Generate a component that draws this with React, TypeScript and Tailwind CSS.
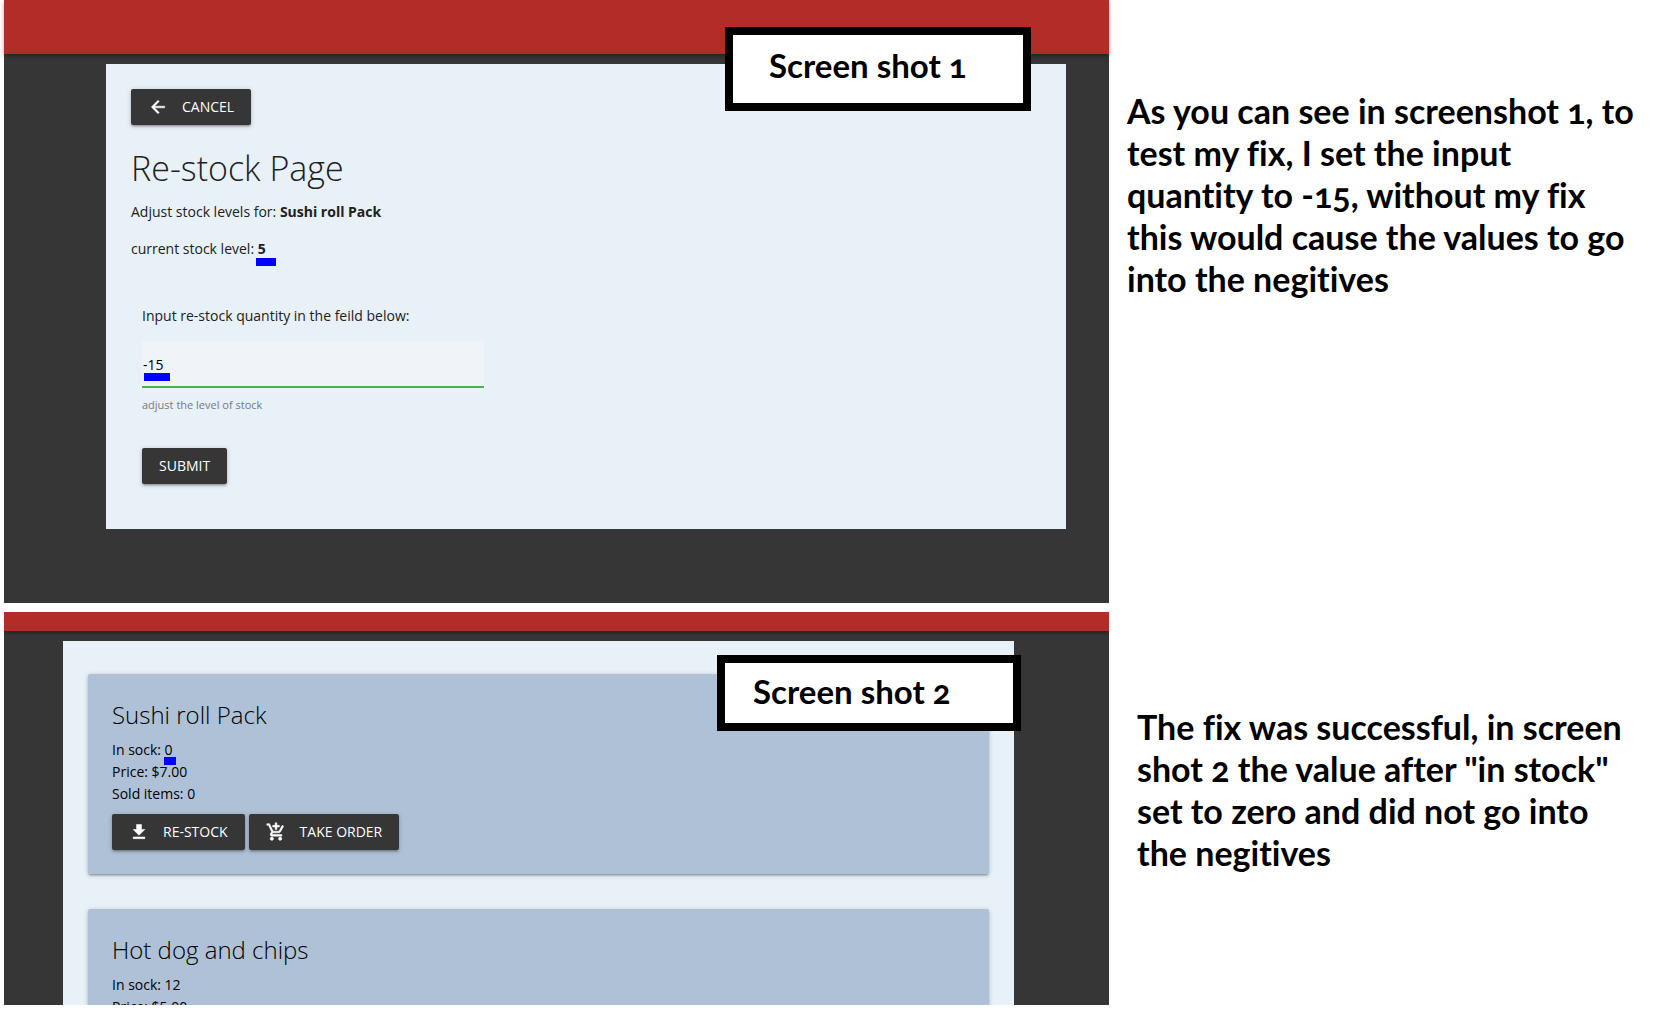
import React from "react";

const shadow =
  "shadow-[0_2px_2px_0_rgba(0,0,0,0.14),0_3px_1px_-2px_rgba(0,0,0,0.12),0_1px_5px_0_rgba(0,0,0,0.2)]";

const icons = {
  back: "M20 11H7.83l5.59-5.59L12 4l-8 8 8 8 1.41-1.41L7.83 13H20v-2z",
  download: "M19 9h-4V3H9v6H5l7 7 7-7zM5 18v2h14v-2H5z",
  cart: "M11 9h2V6h3V4h-3V1h-2v3H8v2h3v3zm-4 9c-1.1 0-1.99.9-1.99 2S5.9 22 7 22s2-.9 2-2-.9-2-2-2zm10 0c-1.1 0-1.99.9-1.99 2s.89 2 1.99 2 2-.9 2-2-.9-2-2-2zm-9.83-3.25.03-.12.9-1.63h7.45c.75 0 1.41-.41 1.75-1.03l3.86-7.01L19.42 4h-.01l-1.1 2-2.76 5H8.53l-.13-.27L6.16 6l-.95-2-.94-2H1v2h2l3.6 7.59-1.35 2.45c-.16.28-.25.61-.25.96 0 1.1.9 2 2 2h12v-2H7.42c-.13 0-.25-.11-.25-.25z",
};

function Button({ icon, children }: { icon?: keyof typeof icons; children: React.ReactNode }) {
  return (
    <button
      type="button"
      className={`inline-flex h-9 items-center rounded-[2px] bg-[#363636] px-[17px] text-sm font-medium text-white ${shadow}`}
    >
      {icon && (
        <svg viewBox="0 0 24 24" className="mr-[14px] size-5 fill-current stroke-current stroke-[0.6]" aria-hidden="true">
          <path d={icons[icon]} />
        </svg>
      )}
      {children}
    </button>
  );
}

function Mark({ className }: { className: string }) {
  return <span className={`absolute h-2 bg-[#0000ff] ${className}`} />;
}

function Item({ name, stock, price, sold, marked }: { name: string; stock: number; price: string; sold: number; marked?: boolean }) {
  return (
    <article className={`rounded-[2px] bg-[#aec1d6] p-6 text-black ${shadow}`}>
      <h2 className="mb-[7px] text-2xl leading-[34px] font-light">{name}</h2>
      <p className="text-sm leading-[22px]">
        In sock:{" "}
        <span className="relative">
          {stock}
          {marked && <Mark className="-left-px top-[17px] w-3" />}
        </span>
      </p>
      <p className="text-sm leading-[22px]">Price: {price}</p>
      <p className="text-sm leading-[22px]">Sold items: {sold}</p>
      <div className="mt-[9px] flex gap-1">
        <Button icon="download">RE-STOCK</Button>
        <Button icon="cart">TAKE ORDER</Button>
      </div>
    </article>
  );
}

const candara =
  "font-['Candara','Lato',sans-serif] font-bold text-black [font-variant-numeric:oldstyle-nums] [font-variant-ligatures:no-common-ligatures]";

function Caption({ className, children }: { className: string; children: React.ReactNode }) {
  return (
    <h3 className={`absolute border-8 border-black bg-white text-[33px] leading-[42px] whitespace-nowrap ${candara} ${className}`}>
      {children}
    </h3>
  );
}

function Note({ className, lines }: { className: string; lines: string[] }) {
  return (
    <p className={`text-[34px] leading-[42px] whitespace-nowrap ${candara} ${className}`}>
      {lines.map((line) => (
        <span key={line} className="block">
          {line}
        </span>
      ))}
    </p>
  );
}

export default function App() {
  return (
    <main className="grid min-h-screen grid-cols-[1105fr_561fr] content-start gap-y-[9px] bg-white pl-1 font-['Segoe_UI','Open_Sans',sans-serif] text-[#212121]">
      <section className="relative bg-[#363636] pb-[74px]">
        <header className="h-[54px] bg-[#b22c28] shadow-[0_2px_4px_rgba(0,0,0,0.35)]" />
        <div className="mt-[10px] mr-[43px] ml-[102px] bg-[#e8f0f8] px-[25px] pt-[25px] pb-[45px]">
          <Button icon="back">CANCEL</Button>
          <h1 className="mt-5 text-[34px] leading-[46px] font-light">Re-stock Page</h1>
          <p className="mt-[10px] text-sm leading-[22px]">
            Adjust stock levels for: <b>Sushi roll Pack</b>
          </p>
          <p className="mt-[15px] text-sm leading-[22px]">
            current stock level:{" "}
            <b className="relative">
              5
              <Mark className="-left-[2px] top-[19px] w-5" />
            </b>
          </p>
          <form className="mt-[45px] px-[11px]">
            <label htmlFor="quantity" className="block text-sm leading-[22px]">
              Input re-stock quantity in the feild below:
            </label>
            <div className="relative mt-[14px] w-[342px]">
              <input
                id="quantity"
                type="text"
                defaultValue="-15"
                className="block h-[47px] w-full border-b-2 border-[#4caf50] bg-[#f0f4f9] px-px pt-[2px] text-sm text-black outline-none"
              />
              <Mark className="left-[2px] top-8 w-[26px]" />
            </div>
            <small className="mt-2 mb-[34px] block text-[11px] leading-[18px] text-[#757b81]">adjust the level of stock</small>
            <Button>SUBMIT</Button>
          </form>
        </div>
        <Caption className="top-[27px] right-[78px] h-[84px] w-[306px] pt-[9px] pl-9">Screen shot 1</Caption>
      </section>
      <Note
        className="pt-[90px] pl-[18px]"
        lines={[
          "As you can see in screenshot 1, to",
          "test my fix, I set the input",
          "quantity to -15, without my fix",
          "this would cause the values to go",
          "into the negitives",
        ]}
      />
      <section className="relative h-[393px] overflow-hidden bg-[#363636]">
        <header className="h-[19px] bg-[#b22c28] shadow-[0_2px_4px_rgba(0,0,0,0.35)]" />
        <div className="mt-[10px] mr-[95px] ml-[59px] flex flex-col gap-[35px] bg-[#e8f0f8] px-[25px] py-[33px]">
          <Item name="Sushi roll Pack" stock={0} price="$7.00" sold={0} marked />
          <Item name="Hot dog and chips" stock={12} price="$5.00" sold={0} />
        </div>
        <Caption className="top-[43px] right-[88px] h-[76px] w-[304px] pt-[7px] pl-7">Screen shot 2</Caption>
      </section>
      <Note
        className="pt-[94px] pl-7"
        lines={[
          "The fix was successful, in screen",
          'shot 2 the value after "in stock"',
          "set to zero and did not go into",
          "the negitives",
        ]}
      />
    </main>
  );
}
